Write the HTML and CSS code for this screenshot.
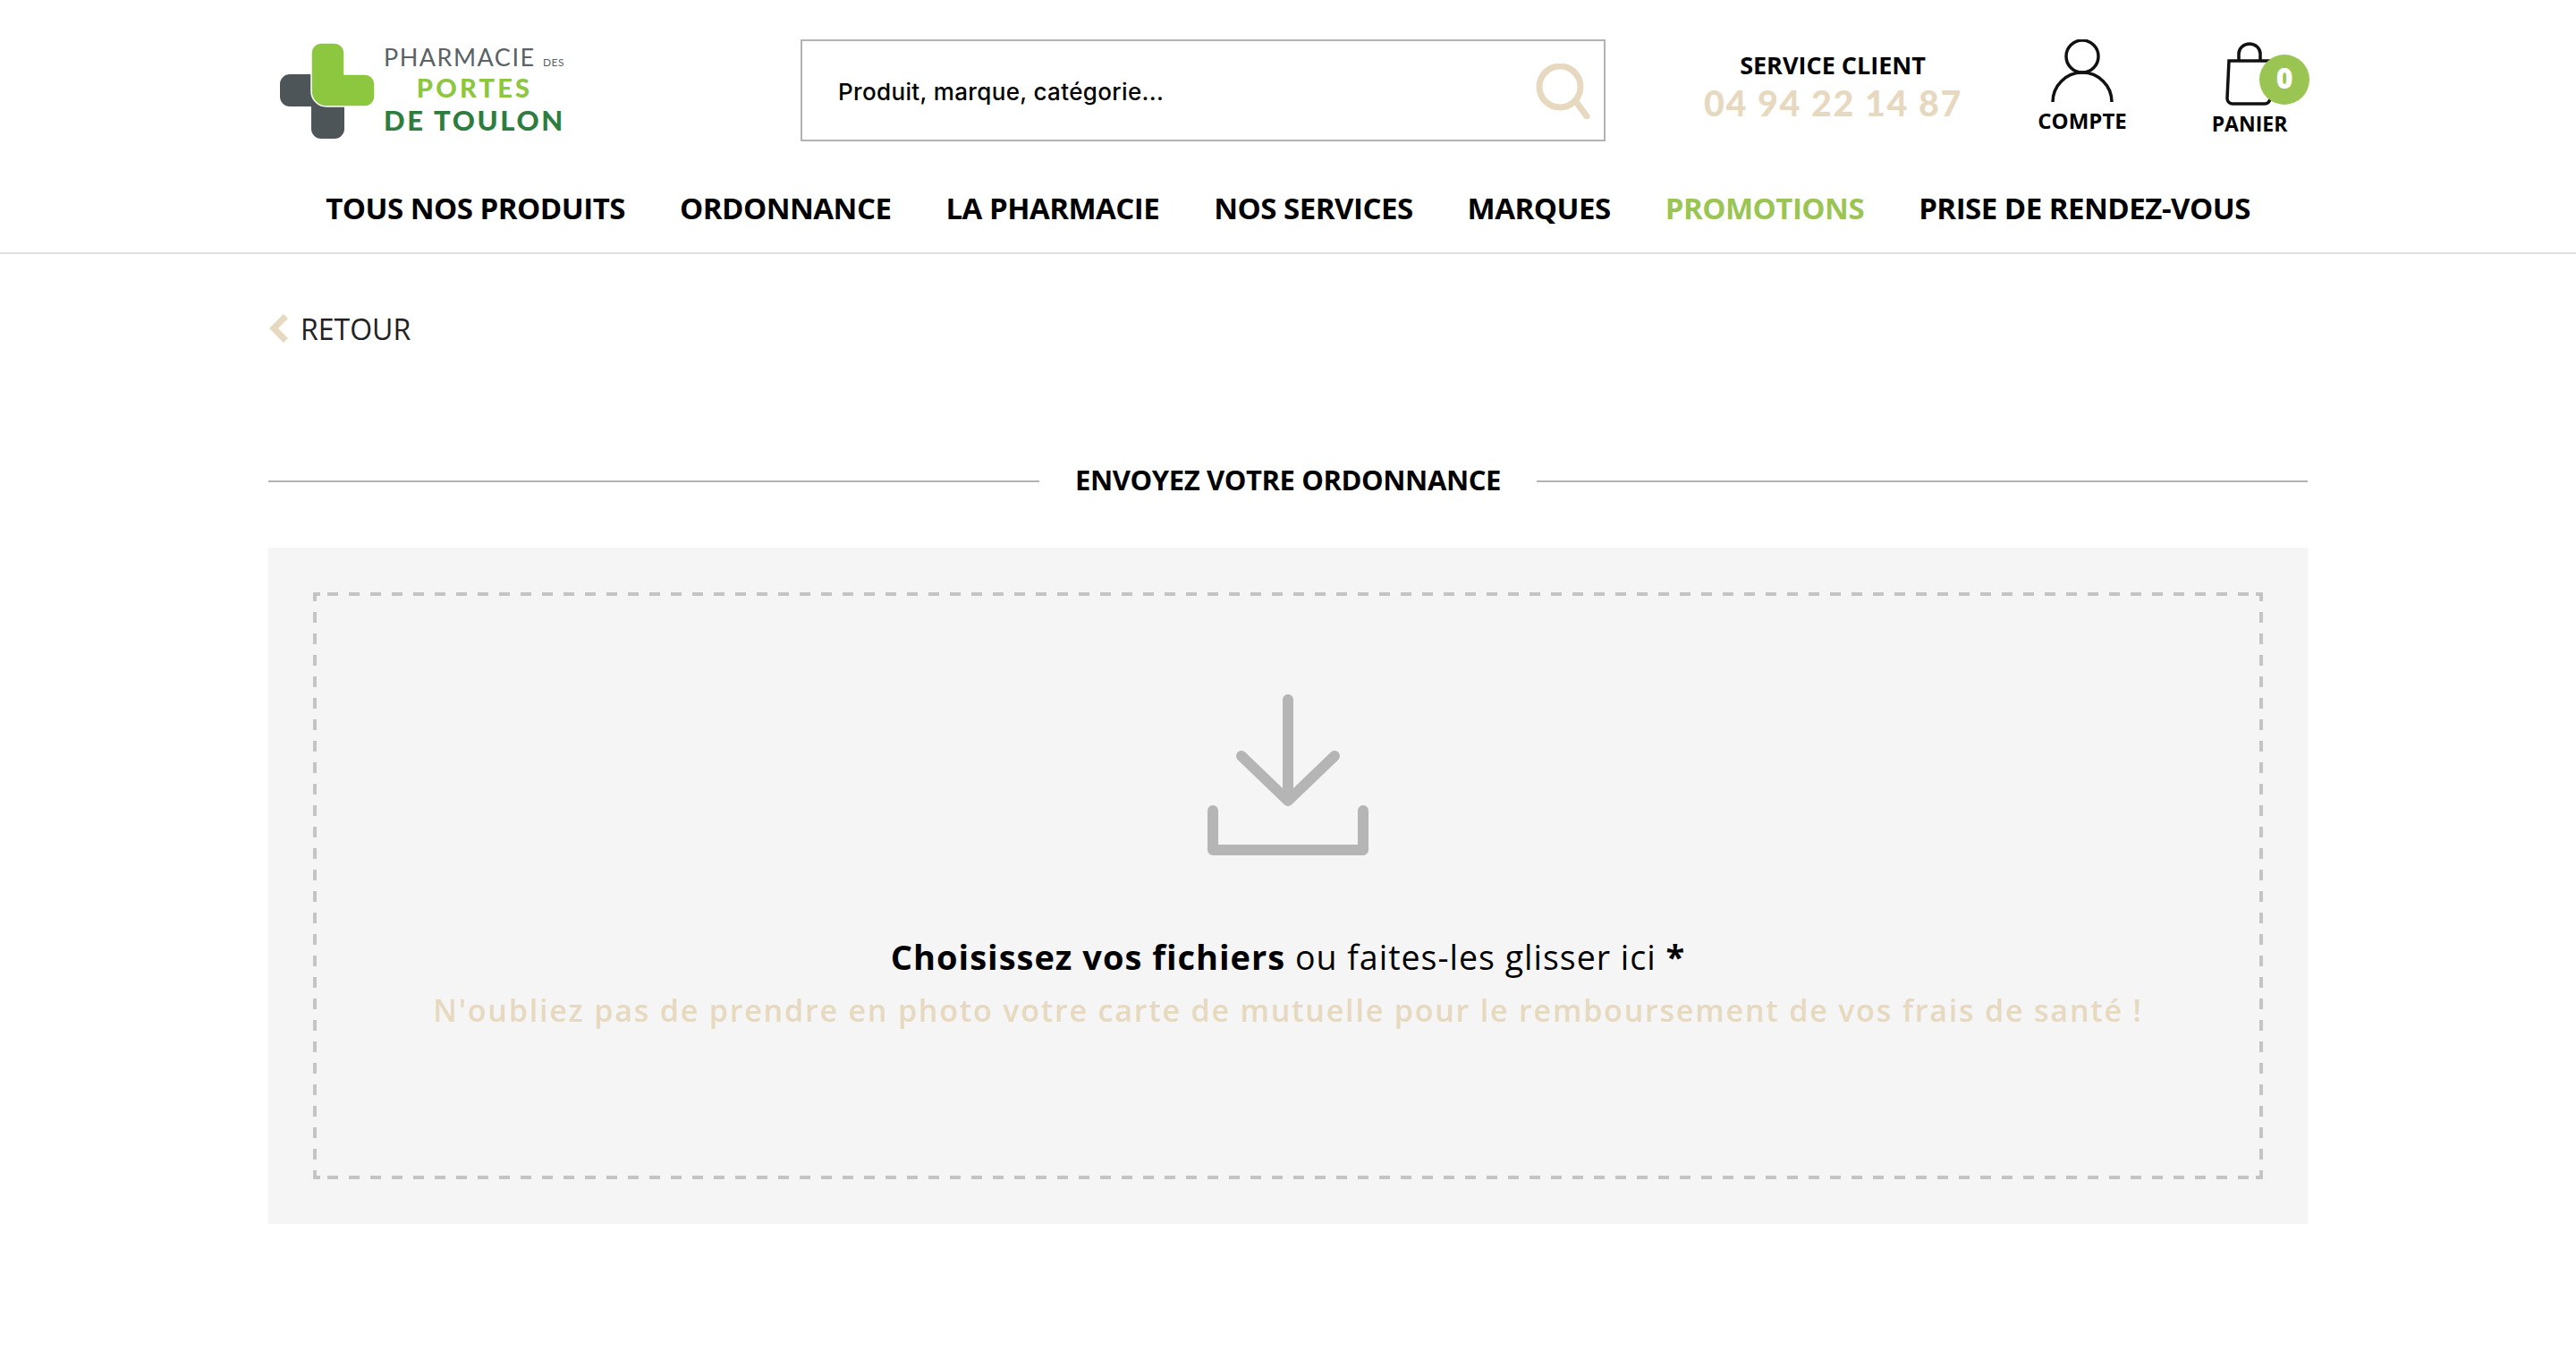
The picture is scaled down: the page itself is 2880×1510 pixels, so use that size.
FILE: index.html
```html
<html>

<head>
    <meta charset="utf-8">
    <title>Envoyez votre ordonnance</title>
    <link rel="stylesheet" href="styles.css">
</head>

<body>
    <header class="site-header">
        <div class="wrap">
            <div class="top-row">
                <a class="logo" href="#">
                    <svg class="logo-cross" width="106" height="107" viewBox="0 0 106 107">
                        <path fill="#4d5558" d="M11 35h40v36h21v25a11 11 0 0 1-11 11H46a11 11 0 0 1-11-11V71H11A11 11 0 0 1 0 60V46a11 11 0 0 1 11-11z" />
                        <path fill="#8dc63f" stroke="#fff" stroke-width="1.5" d="M46 0h15a11 11 0 0 1 11 11v24h23a11 11 0 0 1 11 11v14a11 11 0 0 1-11 11H52a17 17 0 0 1-17-17V11A11 11 0 0 1 46 0z" />
                    </svg>
                    <div class="logo-text">
                        <div class="logo-line1">PHARMACIE <small>DES</small></div>
                        <div class="logo-line2">PORTES</div>
                        <div class="logo-line3">DE TOULON</div>
                    </div>
                </a>
                <div class="search">
                    <span class="search-text">Produit, marque, catégorie...</span>
                    <svg width="62" height="62" viewBox="0 0 62 62">
                        <circle cx="27" cy="26" r="23" fill="none" stroke="#e6d9c0" stroke-width="7" />
                        <path d="M46 44l11 15" fill="none" stroke="#e6d9c0" stroke-width="7" stroke-linecap="round" />
                    </svg>
                </div>
                <div class="service">
                    <div class="service-title">SERVICE CLIENT</div>
                    <div class="service-phone">04 94 22 14 87</div>
                </div>
                <a class="account" href="#">
                    <svg width="70" height="72" viewBox="0 0 70 72">
                        <circle cx="35" cy="19" r="18" fill="none" stroke="#111" stroke-width="3.5" />
                        <path d="M2 70a33 33 0 0 1 66 0" fill="none" stroke="#111" stroke-width="3.5" />
                    </svg>
                    <span>COMPTE</span>
                </a>
                <a class="cart" href="#">
                    <div class="cart-icon">
                        <svg width="56" height="72" viewBox="0 0 56 72">
                            <path d="M16 22V13a12 11 0 0 1 24 0v9" fill="none" stroke="#111" stroke-width="3.5" />
                            <path d="M5 21h46v42a6 6 0 0 1-6 6H9a6 6 0 0 1-6-6z" fill="none" stroke="#111" stroke-width="3.5" />
                        </svg>
                        <b class="cart-count">0</b>
                    </div>
                    <span class="cart-label">PANIER</span>
                </a>
            </div>
            <nav class="main-nav">
                <a href="#">TOUS NOS PRODUITS</a>
                <a href="#">ORDONNANCE</a>
                <a href="#">LA PHARMACIE</a>
                <a href="#">NOS SERVICES</a>
                <a href="#">MARQUES</a>
                <a class="promo" href="#">PROMOTIONS</a>
                <a href="#">PRISE DE RENDEZ-VOUS</a>
            </nav>
        </div>
    </header>

    <main class="wrap">
        <a class="back" href="#">
            <svg width="22" height="32" viewBox="0 0 22 32">
                <path d="M17 0l5 5-11 11 11 11-5 5L1 16z" fill="#e6d9c0" />
            </svg>
            RETOUR
        </a>

        <div class="section-title"><h1>ENVOYEZ VOTRE ORDONNANCE</h1></div>

        <div class="upload-panel">
            <div class="dropzone">
                <svg width="180" height="180" viewBox="0 0 180 180">
                    <path d="M90 6v112M38 69l52 50 52-50" fill="none" stroke="#b5b5b5" stroke-width="12" stroke-linecap="round" stroke-linejoin="round" />
                    <path d="M6 130v44h168v-44" fill="none" stroke="#b5b5b5" stroke-width="12" stroke-linecap="round" stroke-linejoin="round" />
                </svg>
                <p class="drop-main"><b>Choisissez vos fichiers</b> ou faites-les glisser ici <b>*</b></p>
                <p class="drop-note">N'oubliez pas de prendre en photo votre carte de mutuelle pour le remboursement de vos frais de santé !</p>
            </div>
        </div>
    </main>
</body>

</html>
```

FILE: styles.css
```css
body {
    margin: 0;
    background: #fff;
    color: #000;
    font-family: "Open Sans", Lato, sans-serif;
}

a {
    color: inherit;
    text-decoration: none;
}

.wrap {
    width: 2280px;
    margin: 0 auto;
}

.site-header {
    border-bottom: 2px solid #e0e0e0;
}

.top-row {
    display: flex;
    align-items: flex-start;
    height: 186px;
    padding-left: 13px;
}

/* logo */
.logo {
    display: flex;
    width: 582px;
    padding-top: 48px;
}

.logo-cross {
    flex: none;
}

.logo-text {
    margin-left: 10px;
    font-family: Lato, sans-serif;
    font-weight: 900;
    text-align: center;
    white-space: nowrap;
}

.logo-line1 {
    color: #5b6266;
    font-size: 27px;
    line-height: 32px;
    font-weight: 400;
    letter-spacing: 1.5px;
    text-align: left;
}

.logo-line1 small {
    font-size: 12px;
    line-height: 1;
    letter-spacing: .5px;
}

.logo-line2 {
    color: #8dc63f;
    font-size: 29px;
    line-height: 36px;
    letter-spacing: 3.2px;
}

.logo-line3 {
    color: #2e7d3e;
    font-size: 31px;
    line-height: 36px;
    letter-spacing: 2.7px;
}

/* search */
.search {
    display: flex;
    align-items: center;
    justify-content: space-between;
    box-sizing: border-box;
    width: 900px;
    height: 114px;
    margin-top: 44px;
    padding: 0 14px 0 40px;
    border: 2px solid #b3b3b3;
}

.search-text {
    padding-top: 2px;
    font-family: Inter, sans-serif;
    font-size: 26px;
    font-weight: 500;
    letter-spacing: .35px;
}

.search svg {
    margin-top: 2px;
}

/* service client */
.service {
    width: 288px;
    margin: 52px 0 0 110px;
    text-align: center;
    white-space: nowrap;
}

.service-title {
    font-size: 27px;
    line-height: 42px;
    font-weight: 700;
}

.service-phone {
    color: #e6d9c0;
    font-family: Lato, sans-serif;
    font-size: 39.5px;
    line-height: 42px;
    font-weight: 900;
    letter-spacing: 1.6px;
}

.account,
.cart {
    display: flex;
    flex-direction: column;
    align-items: center;
    width: 100px;
    font-size: 24px;
    font-weight: 700;
}

.account {
    margin: 44px 0 0 85px;
    line-height: 38px;
}

.cart {
    margin: 47px 0 0 87px;
    line-height: 38px;
}

.cart-label {
    font-size: 23px;
}

.cart-icon {
    position: relative;
    height: 72px;
}

.cart-count {
    position: absolute;
    left: 39px;
    top: 14px;
    width: 56px;
    height: 56px;
    border-radius: 50%;
    background: #9bc553;
    color: #fff;
    font-size: 32px;
    line-height: 52px;
    text-align: center;
}

/* nav */
.main-nav {
    display: flex;
    justify-content: center;
    gap: 61px;
    height: 96px;
    line-height: 94px;
    font-size: 33px;
    font-weight: 700;
    letter-spacing: -.5px;
    white-space: nowrap;
}

.main-nav .promo {
    color: #9bc553;
}

/* content */
.back {
    display: flex;
    align-items: center;
    gap: 14px;
    height: 40px;
    margin-top: 63px;
    color: #222;
    font-size: 32px;
}

.section-title {
    display: flex;
    align-items: center;
    gap: 40px;
    margin: 129px 0 0;
    height: 40px;
}

.section-title::before,
.section-title::after {
    content: "";
    flex: 1;
    height: 2px;
    margin-top: 4px;
    background: #b3b3b3;
}

.section-title h1 {
    margin: 0;
    font-size: 31px;
    line-height: 40px;
    font-weight: 700;
    letter-spacing: -.4px;
}

.upload-panel {
    margin-top: 56px;
    padding: 50px;
    background: #f5f5f5;
}

/* the dashes are 12px on, 12px off, which a dashed border can't give */
.dropzone {
    --dash: #c4c4c4;
    --solid: linear-gradient(var(--dash), var(--dash));
    --h-dash: linear-gradient(90deg, var(--dash) 50%, transparent 50%);
    --v-dash: linear-gradient(var(--dash) 50%, transparent 50%);
    height: 656px;
    box-sizing: border-box;
    padding-top: 112px;
    text-align: center;
    background:
        var(--solid) left top / 8px 4px no-repeat,
        var(--solid) left top / 4px 10px no-repeat,
        var(--solid) right top / 8px 4px no-repeat,
        var(--solid) right top / 4px 10px no-repeat,
        var(--solid) left bottom / 8px 4px no-repeat,
        var(--solid) left bottom / 4px 10px no-repeat,
        var(--solid) right bottom / 8px 4px no-repeat,
        var(--solid) right bottom / 4px 10px no-repeat,
        var(--h-dash) 16px 0 / 24px 4px repeat-x,
        var(--h-dash) 16px 100% / 24px 4px repeat-x,
        var(--v-dash) 0 22px / 4px 24px repeat-y,
        var(--v-dash) 100% 22px / 4px 24px repeat-y;
}

.dropzone svg {
    display: block;
    margin: 2px auto 0;
}

.drop-main {
    margin: 86px 0 0;
    font-size: 37.5px;
    line-height: 54px;
    letter-spacing: 1px;
}

.drop-main b {
    font-size: 38px;
}

.drop-note {
    margin: 5px 0 0;
    color: #e6d9c0;
    font-size: 34px;
    line-height: 54px;
    font-weight: 600;
    letter-spacing: 1.8px;
}
```
